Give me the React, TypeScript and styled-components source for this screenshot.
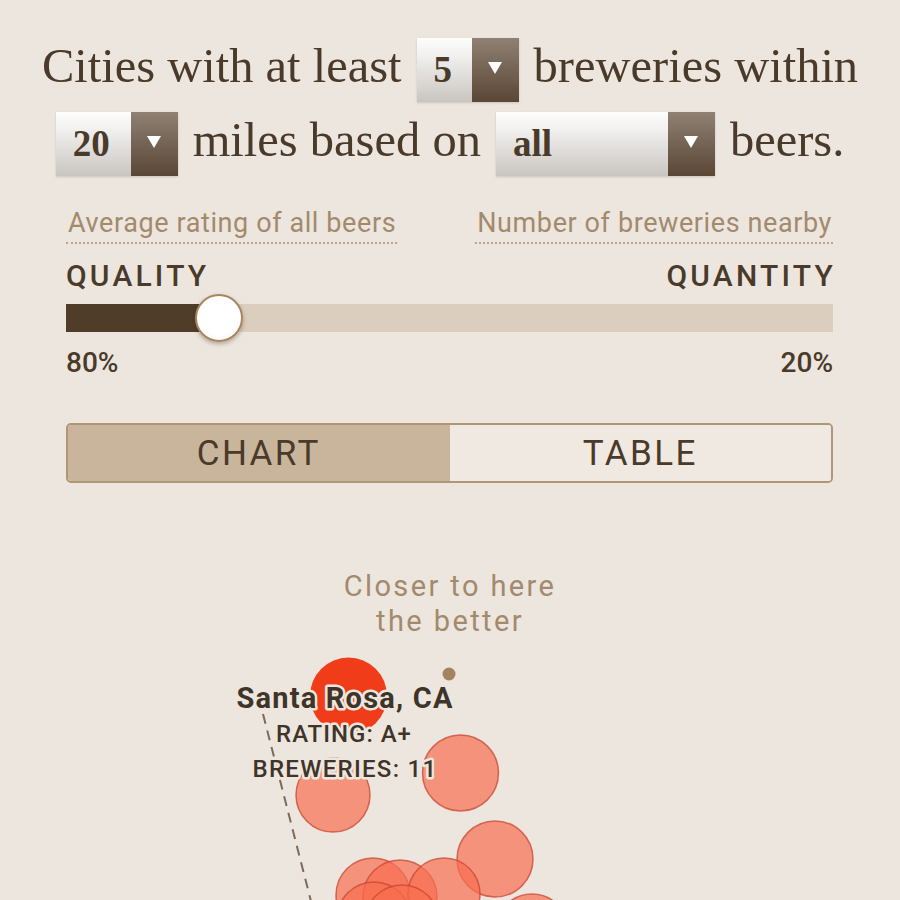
import React from "react";
import styled, { createGlobalStyle } from "styled-components";

const BG = "#ede6df";
const DARK = "#4a3a2a";
const LIGHT = "#a38a6c";

const GlobalStyle = createGlobalStyle`
  html, body { margin: 0; padding: 0; background: ${BG}; overflow: hidden; }
  body { font-family: Roboto, "Liberation Sans", sans-serif; }
`;

const Page = styled.div`
  width: 900px;
  height: 900px;
  overflow: hidden;
  background: ${BG};
  padding-top: 38px;
  box-sizing: border-box;
`;

const Headline = styled.div`
  display: flex;
  flex-direction: column;
  align-items: center;
  gap: 10px;
`;

const Line = styled.div`
  display: flex;
  align-items: baseline;
  gap: 15px;
  white-space: nowrap;
  font-family: "Liberation Serif", "Times New Roman", serif;
  font-size: 48.5px;
  line-height: 1;
  color: ${DARK};
`;

const Select = styled.div`
  display: inline-flex;
  height: 64px;
  box-shadow: 0 1px 2px rgba(60, 40, 20, 0.18);
`;

const SelectValue = styled.span<{ $width: number }>`
  display: block;
  box-sizing: border-box;
  width: ${(p) => p.$width}px;
  padding: 0 17px;
  line-height: 64px;
  font-size: 37px;
  font-weight: bold;
  color: ${DARK};
  background: linear-gradient(#fdfdfc, #f0efed 30%, #c9c5c1);
`;

const SelectArrow = styled.span`
  display: flex;
  align-items: center;
  justify-content: center;
  width: 47px;
  background: linear-gradient(#8f8173, #5a4635);
  &::after {
    content: "";
    width: 0;
    height: 0;
    margin-top: -4px;
    border-left: 7px solid transparent;
    border-right: 7px solid transparent;
    border-top: 12px solid #fff;
  }
`;

const Controls = styled.div`
  margin: 32px 67px 0 66px;
`;

const Row = styled.div`
  display: flex;
  justify-content: space-between;
  align-items: flex-start;
`;

const AxisLabel = styled.div`
  font-size: 27px;
  line-height: 30px;
  letter-spacing: 0.6px;
  color: ${LIGHT};
  padding: 0 1px 4px 2px;
  border-bottom: 2px dotted #b9a58c;
`;

const AxisName = styled.div`
  margin-top: 17px;
  font-size: 30px;
  line-height: 30px;
  font-weight: 500;
  letter-spacing: 3.2px;
  color: ${DARK};
`;

const Track = styled.div`
  position: relative;
  margin-top: 13px;
  height: 28px;
  background: #dccebf;
`;

const Fill = styled.div`
  height: 100%;
  background: #4f3c29;
`;

const Thumb = styled.div`
  position: absolute;
  top: 50%;
  width: 48px;
  height: 48px;
  box-sizing: border-box;
  margin: -24px 0 0 -24px;
  border-radius: 50%;
  background: radial-gradient(circle at 50% 40%, #fff 60%, #f4f1ee);
  border: 2px solid #a8865d;
  box-shadow: 0 2px 4px rgba(60, 40, 20, 0.35);
`;

const Percent = styled.div`
  margin-top: 16px;
  font-size: 28px;
  line-height: 30px;
  font-weight: 500;
  color: ${DARK};
`;

const Toggle = styled.div`
  margin-top: 45px;
  height: 60px;
  box-sizing: border-box;
  display: grid;
  grid-template-columns: 1fr 1fr;
  border: 2px solid #b09674;
  border-radius: 5px;
  overflow: hidden;
`;

const Tab = styled.div<{ $active?: boolean }>`
  display: flex;
  align-items: center;
  justify-content: center;
  font-size: 35px;
  letter-spacing: 2.4px;
  color: ${DARK};
  background: ${(p) => (p.$active ? "#c9b59c" : "#efe9e2")};
`;

const Caption = styled.div`
  margin-top: 86px;
  font-size: 29px;
  line-height: 35px;
  letter-spacing: 2.4px;
  text-align: center;
  color: ${LIGHT};
`;

const Chart = styled.svg`
  display: block;
  width: 900px;
  height: 261px;
`;

const haloText = {
  fill: "#3f3428",
  stroke: BG,
  strokeWidth: 5,
  strokeLinejoin: "round" as const,
  paintOrder: "stroke",
};

const cities = [
  { x: 460.5, y: 134, r: 38 },
  { x: 333, y: 156, r: 37 },
  { x: 495, y: 220, r: 38 },
  { x: 373, y: 256, r: 37 },
  { x: 400, y: 258, r: 37 },
  { x: 444, y: 255, r: 36 },
  { x: 374, y: 280, r: 37 },
  { x: 402, y: 283, r: 37 },
  { x: 532, y: 292, r: 37 },
];

export default function App() {
  const quality = 20;
  return (
    <Page>
      <GlobalStyle />
      <Headline>
        <Line>
          <span>Cities with at least</span>
          <Select>
            <SelectValue $width={55}>5</SelectValue>
            <SelectArrow />
          </Select>
          <span>breweries within</span>
        </Line>
        <Line>
          <Select>
            <SelectValue $width={75}>20</SelectValue>
            <SelectArrow />
          </Select>
          <span>miles based on</span>
          <Select>
            <SelectValue $width={172}>all</SelectValue>
            <SelectArrow />
          </Select>
          <span>beers.</span>
        </Line>
      </Headline>

      <Controls>
        <Row>
          <AxisLabel>Average rating of all beers</AxisLabel>
          <AxisLabel>Number of breweries nearby</AxisLabel>
        </Row>
        <Row>
          <AxisName>QUALITY</AxisName>
          <AxisName style={{ marginRight: -3 }}>QUANTITY</AxisName>
        </Row>
        <Track>
          <Fill style={{ width: `${quality}%` }} />
          <Thumb style={{ left: `${quality}%` }} />
        </Track>
        <Row>
          <Percent>80%</Percent>
          <Percent>20%</Percent>
        </Row>
        <Toggle>
          <Tab $active>CHART</Tab>
          <Tab>TABLE</Tab>
        </Toggle>
      </Controls>

      <Caption>
        Closer to here
        <br />
        the better
      </Caption>

      <Chart viewBox="0 0 900 261">
        <line
          x1={263}
          y1={75}
          x2={313}
          y2={270}
          stroke="#7d6b58"
          strokeWidth={2}
          strokeDasharray="10 7"
        />
        {cities.map((c, i) => (
          <circle
            key={i}
            cx={c.x}
            cy={c.y}
            r={c.r}
            fill="rgb(248,110,80)"
            fillOpacity={0.7}
            stroke="#c9462f"
            strokeOpacity={0.75}
            strokeWidth={1.5}
          />
        ))}
        <circle cx={348.5} cy={57} r={38.5} fill="#f03c18" />
        <circle cx={449} cy={35} r={6.5} fill="#a5835f" />
        <g textAnchor="middle" fontFamily="Roboto, 'Liberation Sans', sans-serif">
          <text x={345} y={69} fontSize={29} fontWeight={700} letterSpacing={1.2} {...haloText}>
            Santa Rosa, CA
          </text>
          <text x={344} y={103} fontSize={24} fontWeight={500} letterSpacing={1} {...haloText}>
            RATING: A+
          </text>
          <text x={345} y={138} fontSize={24} fontWeight={500} letterSpacing={1.3} {...haloText}>
            BREWERIES: 11
          </text>
        </g>
      </Chart>
    </Page>
  );
}
